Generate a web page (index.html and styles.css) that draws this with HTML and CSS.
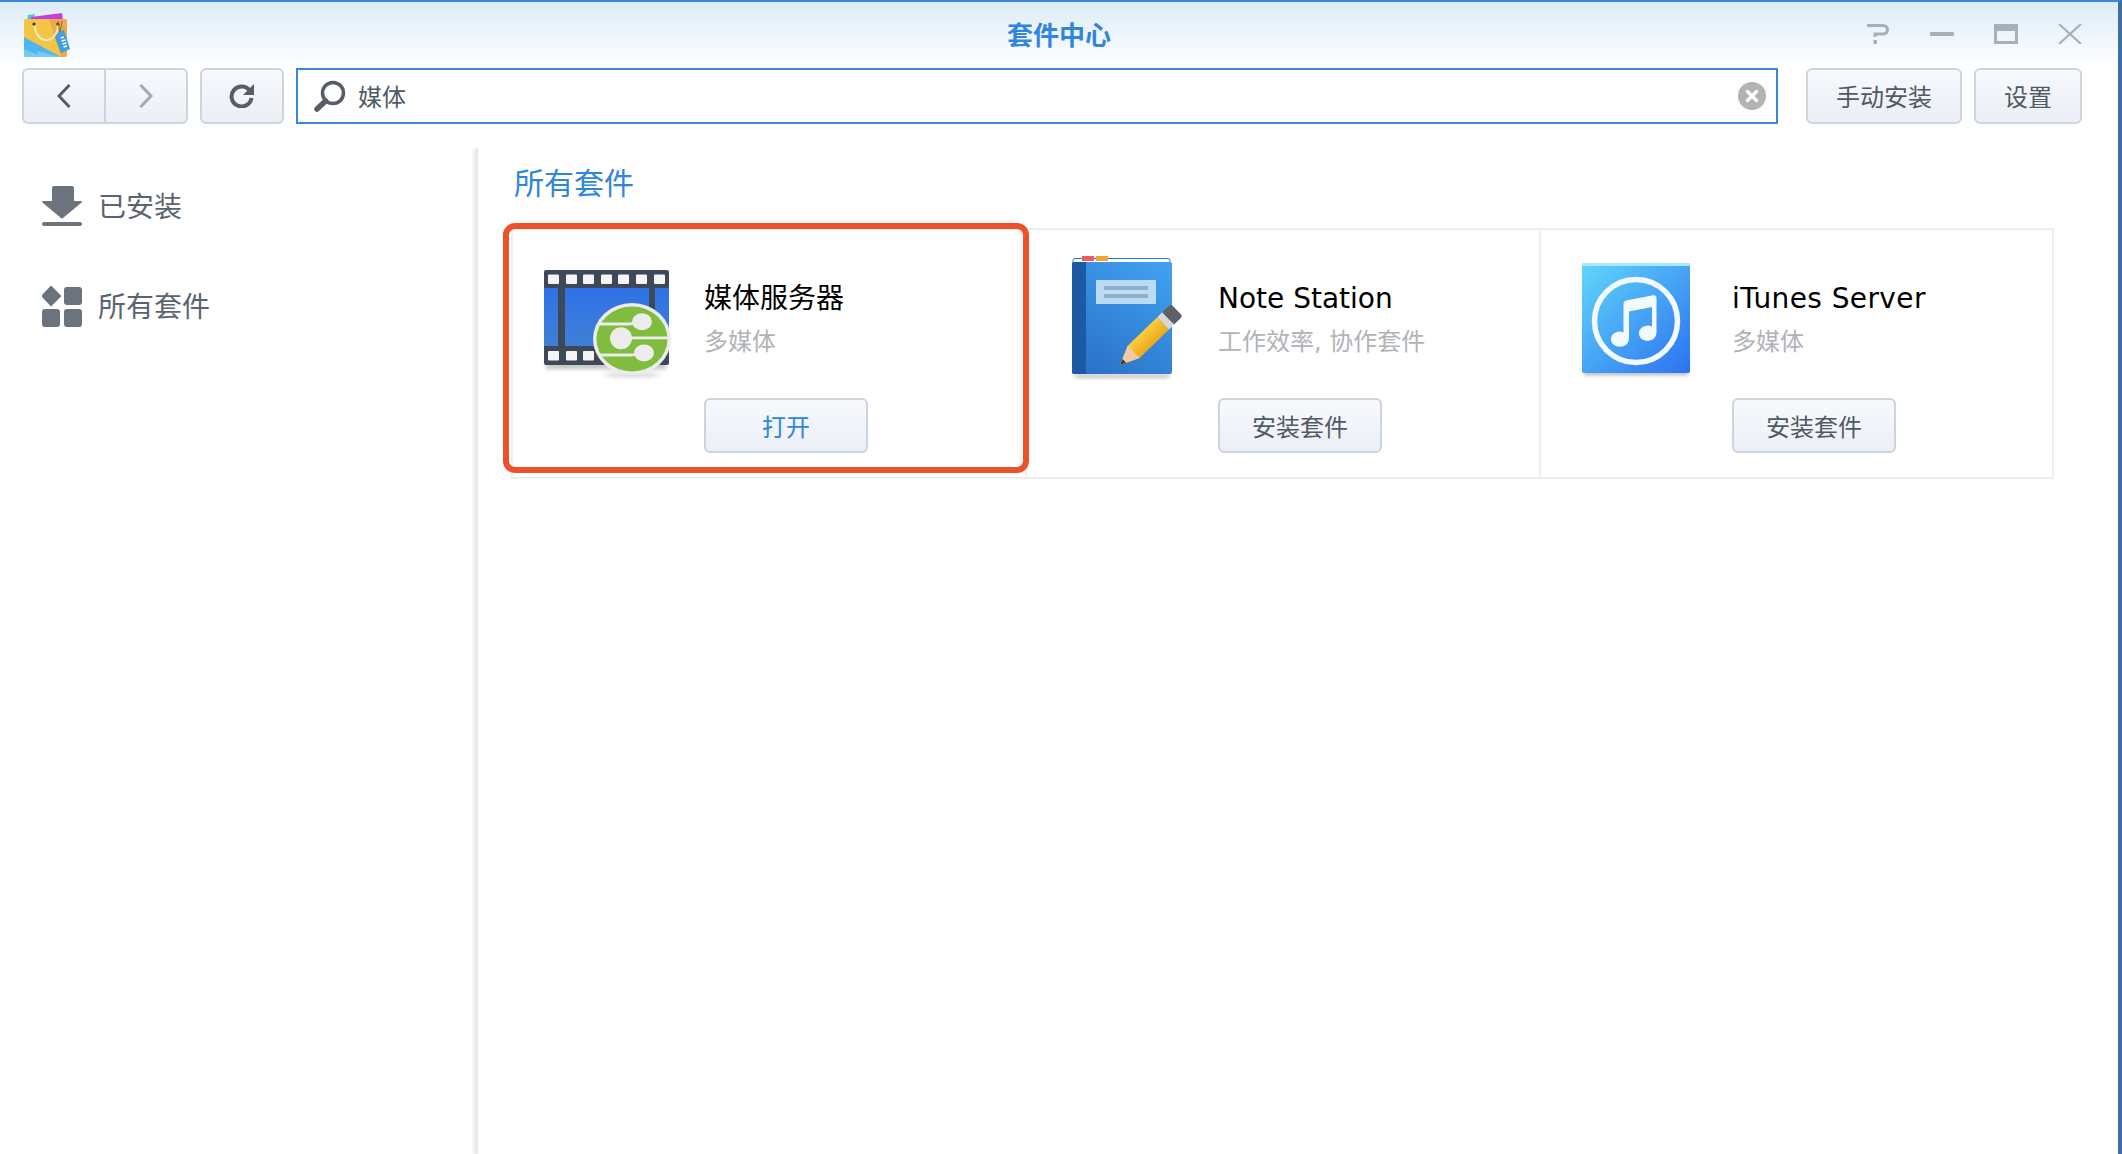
FILE: index.html
```html
<!DOCTYPE html>
<html lang="zh-CN">
<head>
    <meta charset="UTF-8">
    <meta name="viewport" content="width=device-width, initial-scale=1.0">
    <title>套件中心</title>
    <link rel="stylesheet" href="styles.css">
</head>
<body>

<div class="window">
    <div class="title-bar">
        <div class="title-left">
            <svg class="app-logo" width="48" height="46" viewBox="0 0 48 46">
                <defs>
                    <clipPath id="bagClip"><rect x="1" y="6" width="43" height="38" rx="2"/></clipPath>
                </defs>
                <path d="M5 2 L12 1 L10 8 L4 8 Z" fill="#4fc4ea"/>
                <path d="M8 4 L39 0 L40 8 L8 8 Z" fill="#c43fe0"/>
                <g clip-path="url(#bagClip)">
                    <rect x="1" y="6" width="43" height="38" fill="#f2c543"/>
                    <path d="M26 6 H44 V44 H38 Z" fill="#eeaa48"/>
                    <path d="M1 24 L38 44 H1 Z" fill="#4fb4f4"/>
                    <path d="M1 36 L20 44 H1 Z" fill="#72cdf0"/>
                    <path d="M14 38 L38 44 H14 Z" fill="#72cdf0"/>
                </g>
                <path d="M12 12 C12 32 34 32 35 12" fill="none" stroke="#f5e6c0" stroke-width="2"/>
                <circle cx="11" cy="11" r="1.6" fill="#3a3328"/>
                <circle cx="35" cy="11" r="1.6" fill="#3a3328"/>
                <path d="M35 8 L37 20 M39 8 L37 20" fill="none" stroke="#8a6f35" stroke-width="1"/>
                <path d="M36 19 L41 17 L47 36 L38 40 L32 24 Z" fill="#3f9fe4"/>
                <path d="M37.5 25 L41 24 M38.5 28 L42.5 27 M39.5 31 L43.5 30 M40.5 34 L44 33" stroke="#ffffff" stroke-width="1.8"/>
            </svg>
        </div>
        <div class="window-title">套件中心</div>
        <div class="window-controls">
            <svg width="24" height="20" viewBox="0 0 24 20">
                <path d="M1 1.5 H17 C23 1.5 23 10 17 10 H9 V13" fill="none" stroke="#a9afb6" stroke-width="3"/>
                <rect x="7.500" y="16" width="3.500" height="4" fill="#a9afb6"/>
            </svg>
            <svg width="24" height="20" viewBox="0 0 24 20">
                <rect x="0" y="8" width="24" height="4" rx="1" fill="#a9afb6"/>
            </svg>
            <svg width="24" height="20" viewBox="0 0 24 20">
                <path d="M0 0 H24 V20 H0 Z M3 7 V17 H21 V7 Z" fill="#a9afb6" fill-rule="evenodd"/>
            </svg>
            <svg width="24" height="20" viewBox="0 0 24 20">
                <path d="M1 0 L23 20 M23 0 L1 20" stroke="#a9afb6" stroke-width="2.200"/>
            </svg>
        </div>
    </div>

    <div class="toolbar">
        <div class="btn-group">
            <div class="tool-btn tool-btn-nav">
                <svg width="14" height="24" viewBox="0 0 14 24">
                    <path d="M12.500 1 L2 12 L12.500 23" fill="none" stroke="#555e68" stroke-width="3"/>
                </svg>
            </div>
            <div class="tool-btn tool-btn-nav">
                <svg width="14" height="24" viewBox="0 0 14 24">
                    <path d="M1.500 1 L12 12 L1.500 23" fill="none" stroke="#a3aab2" stroke-width="3"/>
                </svg>
            </div>
        </div>
        <div class="tool-btn tool-btn-refresh">
            <svg width="26" height="24" viewBox="0 0 26 24">
                <path d="M21 7 A10 10 0 1 0 22.500 14" fill="none" stroke="#555e68" stroke-width="4"/>
                <path d="M25 0 V11 H14 Z" fill="#555e68"/>
            </svg>
        </div>
        <div class="search-box">
            <svg width="32" height="32" viewBox="0 0 32 32">
                <circle cx="19" cy="13" r="10.500" fill="none" stroke="#555e68" stroke-width="3.500"/>
                <path d="M11.500 21 L3 29" stroke="#555e68" stroke-width="5.500" stroke-linecap="round"/>
            </svg>
            <span class="search-text">媒体</span>
            <svg class="search-clear" width="28" height="28" viewBox="0 0 28 28">
                <circle cx="14" cy="14" r="14" fill="#b3b3b3"/>
                <path d="M9.500 9.500 L18.500 18.500 M18.500 9.500 L9.500 18.500" stroke="#ffffff" stroke-width="3.500" stroke-linecap="round"/>
            </svg>
        </div>
        <div class="text-btn text-btn-install">手动安装</div>
        <div class="text-btn text-btn-settings">设置</div>
    </div>

    <div class="content">
        <div class="sidebar">
            <div class="side-item">
                <svg width="40" height="40" viewBox="0 0 40 40">
                    <path d="M10 2 Q10 0 12 0 H30 Q32 0 32 2 V15 H39 Q41 15 39 17 L21 32 Q20 33 19 32 L1 17 Q-1 15 1 15 H10 Z" fill="#6b737d"/>
                    <rect x="0" y="36" width="40" height="4" rx="2" fill="#6b737d"/>
                </svg>
                <span class="side-label">已安装</span>
            </div>
            <div class="side-item">
                <svg width="40" height="42" viewBox="0 0 40 42">
                    <path d="M8 0.500 L17.500 10 Q18.500 11 17.500 12 L8 21.500 L-1 12 Q-2 11 -1 10 Z" fill="#6b737d" transform="translate(1 0)"/>
                    <rect x="22" y="2" width="18" height="18" rx="3" fill="#6b737d"/>
                    <rect x="0" y="24" width="18" height="18" rx="3" fill="#6b737d"/>
                    <rect x="22" y="24" width="18" height="18" rx="3" fill="#6b737d"/>
                </svg>
                <span class="side-label">所有套件</span>
            </div>
        </div>

        <div class="main">
            <h2 class="section-title">所有套件</h2>
            <div class="card-grid">
                <div class="card">
                    <div class="card-icon">
                        <svg width="150" height="130" viewBox="0 0 150 130">
                            <defs>
                                <linearGradient id="filmBlue" x1="0" y1="0" x2="0" y2="1">
                                    <stop offset="0" stop-color="#2f72e6"/>
                                    <stop offset="1" stop-color="#3f80d6"/>
                                </linearGradient>
                                <filter id="softShadow" x="-20%" y="-100%" width="140%" height="300%">
                                    <feGaussianBlur stdDeviation="2"/>
                                </filter>
                            </defs>
                            <rect x="5" y="113" width="120" height="6" fill="#000000" opacity="0.25" filter="url(#softShadow)"/>
                            <rect x="3" y="20" width="125" height="95" rx="2" fill="#3e4957"/>
                            <rect x="3" y="38" width="125" height="58" fill="url(#filmBlue)"/>
                            <rect x="17" y="38" width="7" height="58" fill="#3e4957"/>
                            <rect x="108" y="38" width="6" height="58" fill="#3e4957"/>
                            <g fill="#f4f4f4">
                                <rect x="7" y="24.500" width="11" height="9.500" rx="1"/>
                                <rect x="25" y="24.500" width="11" height="9.500" rx="1"/>
                                <rect x="42" y="24.500" width="11" height="9.500" rx="1"/>
                                <rect x="60" y="24.500" width="11" height="9.500" rx="1"/>
                                <rect x="77" y="24.500" width="11" height="9.500" rx="1"/>
                                <rect x="95" y="24.500" width="11" height="9.500" rx="1"/>
                                <rect x="113" y="24.500" width="11" height="9.500" rx="1"/>
                                <rect x="7" y="101" width="11" height="9.500" rx="1"/>
                                <rect x="25" y="101" width="11" height="9.500" rx="1"/>
                                <rect x="42" y="101" width="11" height="9.500" rx="1"/>
                            </g>
                            <ellipse cx="91" cy="125" rx="28" ry="2" fill="#000000" opacity="0.2" filter="url(#softShadow)"/>
                            <ellipse cx="91" cy="89" rx="39" ry="36" fill="#ececec"/>
                            <ellipse cx="91" cy="89" rx="35.500" ry="32.500" fill="#80bd3e"/>
                            <g fill="none" stroke="#ececec" stroke-width="2.800">
                                <path d="M58 74 H88 Q92 74 96 72"/>
                                <path d="M84 87.800 H129"/>
                                <path d="M59 105 H90 Q95 105 99 103"/>
                            </g>
                            <g fill="#ececec">
                                <ellipse cx="101" cy="71.700" rx="10" ry="8.500"/>
                                <circle cx="80" cy="88.300" r="11"/>
                                <ellipse cx="103" cy="103" rx="10" ry="8.500"/>
                            </g>
                        </svg>
                    </div>
                    <div class="card-info">
                        <div class="card-name">媒体服务器</div>
                        <div class="card-cat">多媒体</div>
                        <div class="card-btn card-btn-open">打开</div>
                    </div>
                </div>

                <div class="card">
                    <div class="card-icon">
                        <svg width="150" height="130" viewBox="0 0 150 130">
                            <defs>
                                <linearGradient id="bookBlue" x1="0.800" y1="0" x2="0.200" y2="1">
                                    <stop offset="0" stop-color="#3f9fee"/>
                                    <stop offset="1" stop-color="#2a72c8"/>
                                </linearGradient>
                                <linearGradient id="pencilBody" x1="0" y1="0" x2="0" y2="1">
                                    <stop offset="0" stop-color="#f9cf3c"/>
                                    <stop offset="1" stop-color="#eda81d"/>
                                </linearGradient>
                            </defs>
                            <rect x="20" y="124" width="94" height="4" fill="#000000" opacity="0.25" filter="url(#softShadow)"/>
                            <rect x="18" y="8.500" width="97" height="6" rx="2" fill="#ffffff" stroke="#2a72c8" stroke-width="1"/>
                            <rect x="27" y="6" width="12" height="5" fill="#ee5a68"/>
                            <rect x="41" y="6" width="12" height="5" fill="#f3a233"/>
                            <rect x="17" y="12" width="100" height="112" rx="2" fill="url(#bookBlue)"/>
                            <path d="M19 12 H31 V124 H19 Q17 124 17 122 V14 Q17 12 19 12 Z" fill="#1c5aa6"/>
                            <rect x="41" y="30" width="60" height="24" rx="1" fill="#bcdcf5"/>
                            <rect x="49" y="36" width="44" height="4" fill="#8eb0cd"/>
                            <rect x="49" y="44" width="44" height="4" fill="#8eb0cd"/>
                            <g transform="translate(65 115) rotate(-44)">
                                <path d="M0 0 L19 -8.500 H60 V8.500 H19 Z" fill="url(#pencilBody)"/>
                                <path d="M0 0 L19 -8.500 V8.500 Z" fill="#f1c9a2"/>
                                <path d="M0 0 L6 -2.700 V2.700 Z" fill="#3b3b3b"/>
                                <rect x="60" y="-8.500" width="7" height="17" fill="#d6d8da"/>
                                <path d="M67 -8.500 H76 Q79 -8.500 79 -5.500 V5.500 Q79 8.500 76 8.500 H67 Z" fill="#5d6165"/>
                            </g>
                        </svg>
                    </div>
                    <div class="card-info">
                        <div class="card-name">Note Station</div>
                        <div class="card-cat">工作效率, 协作套件</div>
                        <div class="card-btn">安装套件</div>
                    </div>
                </div>

                <div class="card">
                    <div class="card-icon">
                        <svg width="150" height="130" viewBox="0 0 150 130">
                            <defs>
                                <linearGradient id="tunesBlue" x1="0" y1="0" x2="1" y2="1">
                                    <stop offset="0" stop-color="#62d6fb"/>
                                    <stop offset="1" stop-color="#2b72f0"/>
                                </linearGradient>
                            </defs>
                            <rect x="15" y="120" width="104" height="5" fill="#000000" opacity="0.3" filter="url(#softShadow)"/>
                            <rect x="13" y="13" width="108" height="110" rx="2" fill="url(#tunesBlue)"/>
                            <rect x="13" y="13" width="108" height="3" fill="#a9e9fb"/>
                            <circle cx="67" cy="71" r="41.500" fill="none" stroke="#f2fafe" stroke-width="5.500"/>
                            <path d="M54.500 54 Q54.500 51 57 50.500 L84 45.300 Q87.500 44.800 87.500 48 V82 C87.500 94 70 93 70 83.500 C70 77 78 74 83 76.500 V57 L60 61.500 V88 C60 100 42 99 42 89 C42 83 50 80 54.500 82.500 Z" fill="#f2fafe"/>
                        </svg>
                    </div>
                    <div class="card-info">
                        <div class="card-name card-name-wide">iTunes Server</div>
                        <div class="card-cat">多媒体</div>
                        <div class="card-btn">安装套件</div>
                    </div>
                </div>

                <div class="highlight-box"></div>
            </div>
        </div>
    </div>
</div>

</body>
</html>
```

FILE: styles.css
```css
* {
    box-sizing: border-box;
}

body {
    margin: 0;
    font-family: "DejaVu Sans", "Noto Sans CJK SC", sans-serif;
    background-color: white;
    overflow: hidden;
}

.window {
    height: 1154px;
    border-top: 2px solid #3a87d9;
    border-right: 4px solid #3c6ea8;
    display: flex;
    flex-direction: column;
    background-color: white;
}

.title-bar {
    height: 66px;
    flex-shrink: 0;
    display: grid;
    grid-template-columns: 1fr auto 1fr;
    align-items: center;
    padding: 0 23px 2px 23px;
    background: linear-gradient(#ddecf8, #ffffff);
}

.app-logo {
    display: block;
    margin-top: 3px;
}

.window-title {
    font-size: 26px;
    font-weight: bold;
    color: #2f86dc;
    padding-bottom: 2px;
}

.window-controls {
    display: flex;
    justify-content: flex-end;
    gap: 40px;
    padding-right: 13px;
}

.toolbar {
    height: 56px;
    flex-shrink: 0;
    display: flex;
    padding: 0 36px 0 22px;
}

.btn-group {
    display: flex;
    margin-right: 12px;
}

.tool-btn,
.text-btn,
.card-btn {
    display: flex;
    align-items: center;
    justify-content: center;
    background: linear-gradient(#f7f9fd, #ebeff5);
    border: 2px solid #ccd4de;
    border-radius: 6px;
    color: #505a64;
    font-size: 24px;
}

.tool-btn-nav:first-child {
    width: 82px;
    border-radius: 6px 0 0 6px;
    border-right: none;
}

.tool-btn-nav:last-child {
    width: 84px;
    border-radius: 0 6px 6px 0;
}

.tool-btn-refresh {
    width: 84px;
    margin-right: 12px;
}

.search-box {
    flex: 1;
    display: flex;
    align-items: center;
    gap: 12px;
    padding: 0 10px 0 16px;
    border: 2px solid #3a87d9;
    margin-right: 28px;
}

.search-text {
    flex: 1;
    font-size: 24px;
    color: #505a64;
    padding-bottom: 2px;
}

.text-btn {
    padding-bottom: 2px;
}

.text-btn-install {
    width: 156px;
    margin-right: 12px;
}

.text-btn-settings {
    width: 108px;
}

.content {
    flex: 1;
    display: flex;
    margin-top: 24px;
    min-height: 0;
}

.sidebar {
    width: 478px;
    flex-shrink: 0;
    padding-top: 8px;
    background: linear-gradient(to right, #ffffff 472px, #f6f6f6 473px, #e4e4e4 478px);
}

.side-item {
    height: 100px;
    display: flex;
    align-items: center;
    gap: 16px;
    padding-left: 42px;
    font-size: 28px;
    color: #5a6470;
}

.side-label {
    padding-bottom: 2px;
}

.main {
    flex: 1;
    padding-left: 33px;
}

.section-title {
    margin: 0 0 8px;
    padding-left: 3px;
    font-size: 30px;
    line-height: 72px;
    font-weight: normal;
    color: #2f86dc;
}

.card-grid {
    position: relative;
    width: 1543px;
    height: 251px;
    display: grid;
    grid-template-columns: 514px 514px 1fr;
    border: 2px solid #eeeeee;
}

.card {
    display: flex;
    border-right: 2px solid #eeeeee;
}

.card:nth-child(3) {
    border-right: none;
}

.card-icon {
    width: 191px;
    flex-shrink: 0;
    padding: 20px 0 0 28px;
}

.card-icon svg {
    display: block;
}

.card-info {
    padding-top: 49px;
}

.card-name {
    font-size: 28px;
    line-height: 40px;
    color: black;
}

.card-name-wide {
    letter-spacing: 0.4px;
}

.card-cat {
    margin-top: 8px;
    font-size: 24px;
    line-height: 30px;
    color: #b0b3b8;
}

.card-btn {
    width: 164px;
    height: 55px;
    margin-top: 41px;
}

.card-btn-open {
    color: #2f86dc;
}

.highlight-box {
    position: absolute;
    left: -10px;
    top: -7px;
    width: 526px;
    height: 250px;
    border: 6px solid #ee5127;
    border-radius: 12px;
}
```
